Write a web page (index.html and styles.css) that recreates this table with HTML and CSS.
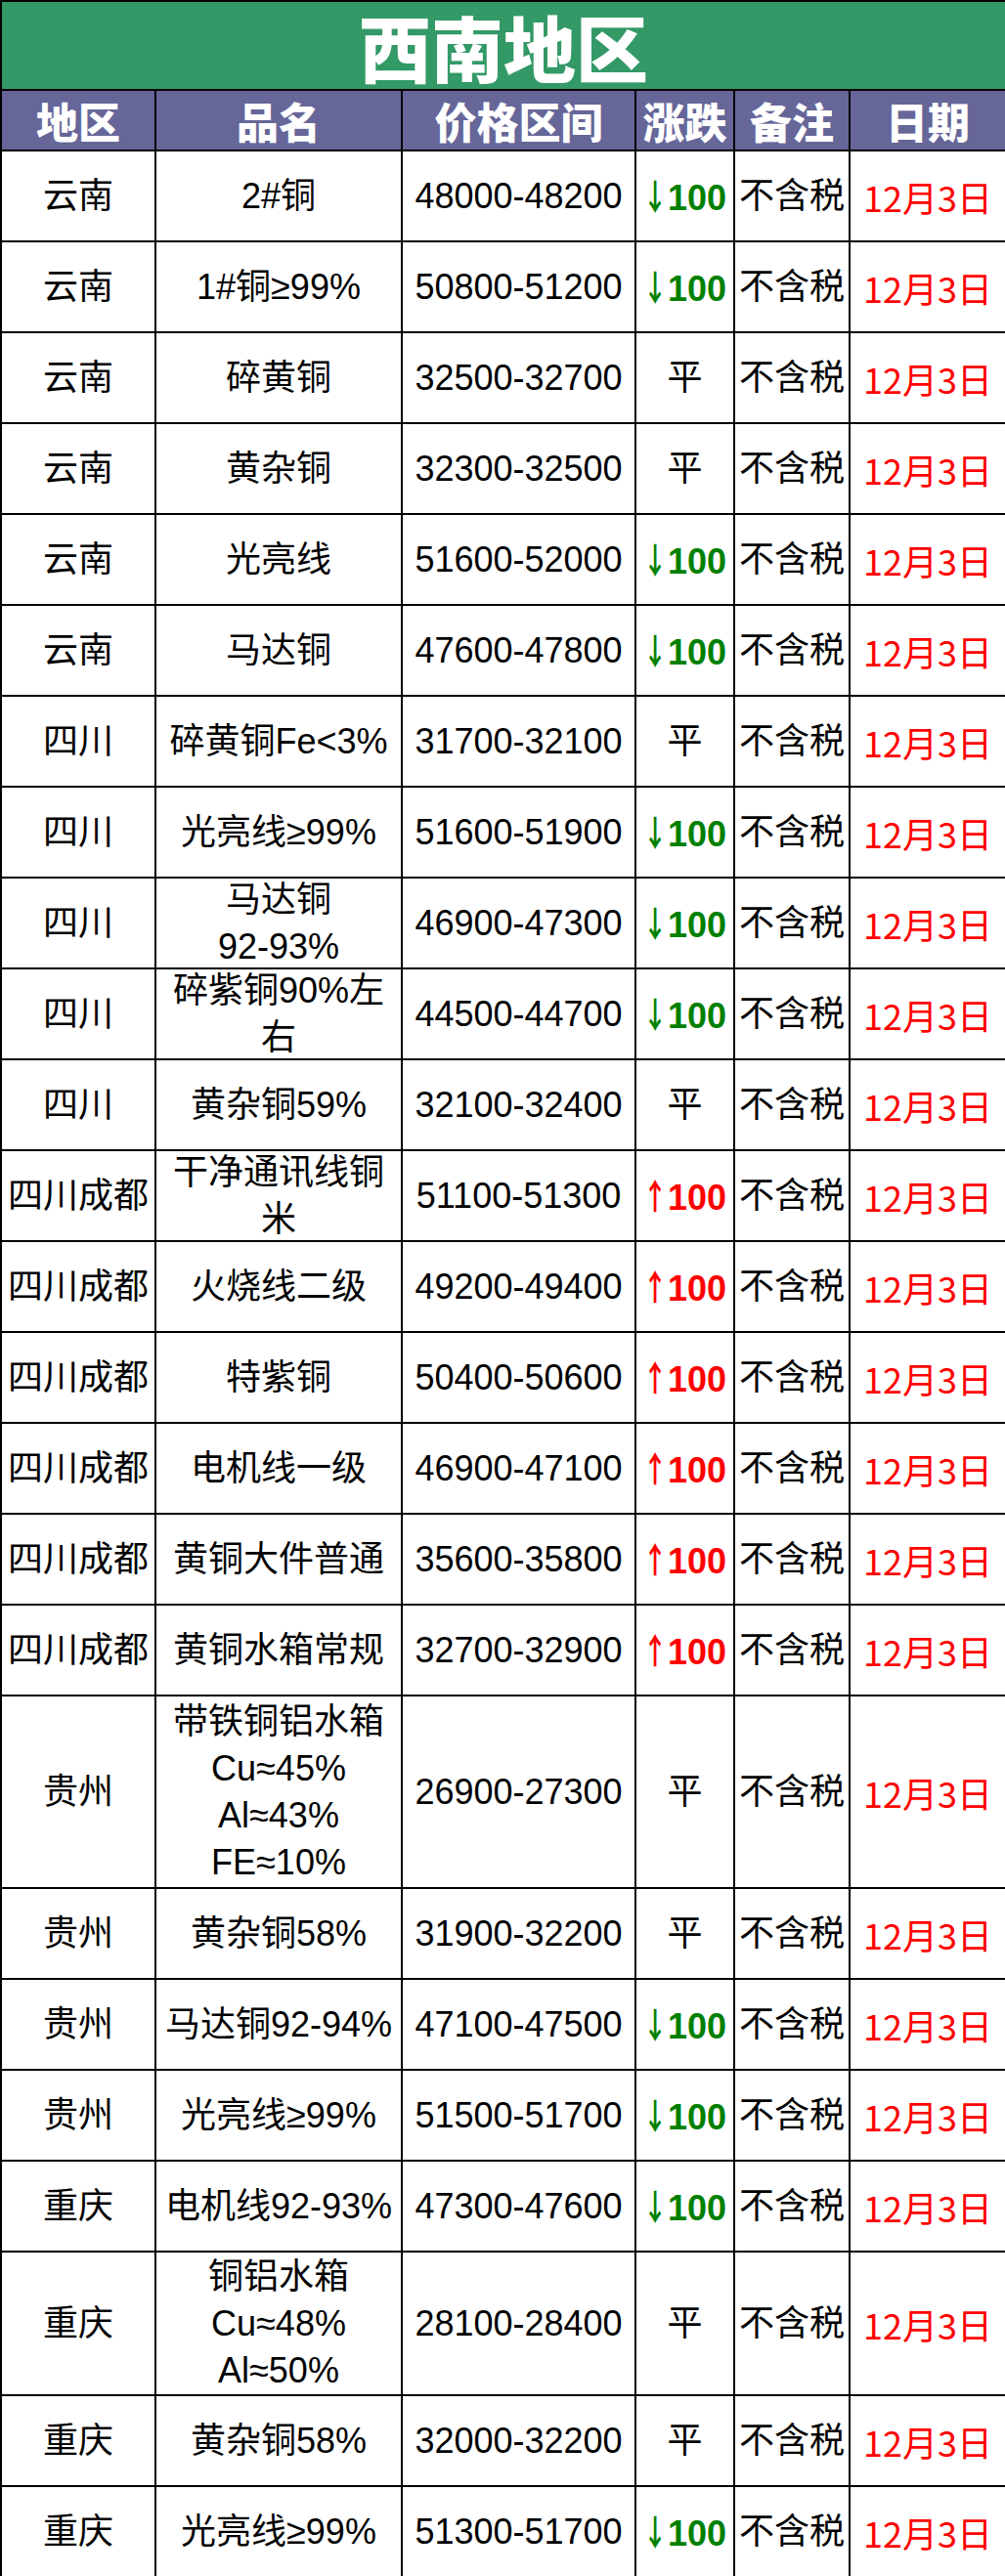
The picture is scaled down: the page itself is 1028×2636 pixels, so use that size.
FILE: index.html
```html
<!DOCTYPE html>
<html lang="zh-CN">
<head>
<meta charset="utf-8">
<title>西南地区</title>
<link rel="stylesheet" href="styles.css">
</head>
<body>
<table class="sheet">
  <colgroup>
    <col class="c-area"><col class="c-name"><col class="c-price"><col class="c-chg"><col class="c-note"><col class="c-date">
  </colgroup>
  <thead>
    <tr class="title-row"><th colspan="6" class="title">西南地区</th></tr>
    <tr class="head-row">
      <th>地区</th><th>品名</th><th>价格区间</th><th>涨跌</th><th>备注</th><th>日期</th>
    </tr>
  </thead>
  <tbody>
    <tr class="r"><td>云南</td><td>2#铜</td><td class="num">48000-48200</td><td class="down"><span class="ar">↓</span>100</td><td>不含税</td><td class="date">12月3日</td></tr>
    <tr class="r"><td>云南</td><td>1#铜≥99%</td><td class="num">50800-51200</td><td class="down"><span class="ar">↓</span>100</td><td>不含税</td><td class="date">12月3日</td></tr>
    <tr class="r"><td>云南</td><td>碎黄铜</td><td class="num">32500-32700</td><td>平</td><td>不含税</td><td class="date">12月3日</td></tr>
    <tr class="r"><td>云南</td><td>黄杂铜</td><td class="num">32300-32500</td><td>平</td><td>不含税</td><td class="date">12月3日</td></tr>
    <tr class="r"><td>云南</td><td>光亮线</td><td class="num">51600-52000</td><td class="down"><span class="ar">↓</span>100</td><td>不含税</td><td class="date">12月3日</td></tr>
    <tr class="r"><td>云南</td><td>马达铜</td><td class="num">47600-47800</td><td class="down"><span class="ar">↓</span>100</td><td>不含税</td><td class="date">12月3日</td></tr>
    <tr class="r"><td>四川</td><td>碎黄铜Fe&lt;3%</td><td class="num">31700-32100</td><td>平</td><td>不含税</td><td class="date">12月3日</td></tr>
    <tr class="r"><td>四川</td><td>光亮线≥99%</td><td class="num">51600-51900</td><td class="down"><span class="ar">↓</span>100</td><td>不含税</td><td class="date">12月3日</td></tr>
    <tr class="r"><td>四川</td><td><span class="ml">马达铜<br>92-93%</span></td><td class="num">46900-47300</td><td class="down"><span class="ar">↓</span>100</td><td>不含税</td><td class="date">12月3日</td></tr>
    <tr class="r"><td>四川</td><td><span class="ml">碎紫铜90%左<br>右</span></td><td class="num">44500-44700</td><td class="down"><span class="ar">↓</span>100</td><td>不含税</td><td class="date">12月3日</td></tr>
    <tr class="r"><td>四川</td><td>黄杂铜59%</td><td class="num">32100-32400</td><td>平</td><td>不含税</td><td class="date">12月3日</td></tr>
    <tr class="r"><td>四川成都</td><td><span class="ml">干净通讯线铜<br>米</span></td><td class="num">51100-51300</td><td class="up"><span class="ar">↑</span>100</td><td>不含税</td><td class="date">12月3日</td></tr>
    <tr class="r"><td>四川成都</td><td>火烧线二级</td><td class="num">49200-49400</td><td class="up"><span class="ar">↑</span>100</td><td>不含税</td><td class="date">12月3日</td></tr>
    <tr class="r"><td>四川成都</td><td>特紫铜</td><td class="num">50400-50600</td><td class="up"><span class="ar">↑</span>100</td><td>不含税</td><td class="date">12月3日</td></tr>
    <tr class="r"><td>四川成都</td><td>电机线一级</td><td class="num">46900-47100</td><td class="up"><span class="ar">↑</span>100</td><td>不含税</td><td class="date">12月3日</td></tr>
    <tr class="r"><td>四川成都</td><td>黄铜大件普通</td><td class="num">35600-35800</td><td class="up"><span class="ar">↑</span>100</td><td>不含税</td><td class="date">12月3日</td></tr>
    <tr class="r"><td>四川成都</td><td>黄铜水箱常规</td><td class="num">32700-32900</td><td class="up"><span class="ar">↑</span>100</td><td>不含税</td><td class="date">12月3日</td></tr>
    <tr class="r4"><td>贵州</td><td>带铁铜铝水箱<br>Cu≈45%<br>Al≈43%<br>FE≈10%</td><td class="num">26900-27300</td><td>平</td><td>不含税</td><td class="date">12月3日</td></tr>
    <tr class="r"><td>贵州</td><td>黄杂铜58%</td><td class="num">31900-32200</td><td>平</td><td>不含税</td><td class="date">12月3日</td></tr>
    <tr class="r"><td>贵州</td><td>马达铜92-94%</td><td class="num">47100-47500</td><td class="down"><span class="ar">↓</span>100</td><td>不含税</td><td class="date">12月3日</td></tr>
    <tr class="r"><td>贵州</td><td>光亮线≥99%</td><td class="num">51500-51700</td><td class="down"><span class="ar">↓</span>100</td><td>不含税</td><td class="date">12月3日</td></tr>
    <tr class="r"><td>重庆</td><td>电机线92-93%</td><td class="num">47300-47600</td><td class="down"><span class="ar">↓</span>100</td><td>不含税</td><td class="date">12月3日</td></tr>
    <tr class="r3"><td>重庆</td><td>铜铝水箱<br>Cu≈48%<br>Al≈50%</td><td class="num">28100-28400</td><td>平</td><td>不含税</td><td class="date">12月3日</td></tr>
    <tr class="r"><td>重庆</td><td>黄杂铜58%</td><td class="num">32000-32200</td><td>平</td><td>不含税</td><td class="date">12月3日</td></tr>
    <tr class="r"><td>重庆</td><td>光亮线≥99%</td><td class="num">51300-51700</td><td class="down"><span class="ar">↓</span>100</td><td>不含税</td><td class="date">12月3日</td></tr>
  </tbody>
</table>
</body>
</html>
```

FILE: styles.css
```css
html, body {
  margin: 0;
  padding: 0;
  background: #ffffff;
}

.sheet {
  width: 1028px;
  border-collapse: collapse;
  table-layout: fixed;
  font-family: "Liberation Sans", "Noto Sans CJK SC", sans-serif;
  color: #000000;
}

.c-area { width: 158px; }
.c-name { width: 252px; }
.c-price { width: 239px; }
.c-chg { width: 101px; }
.c-note { width: 118px; }
.c-date { width: 160px; }

.sheet th,
.sheet td {
  border: 2px solid #000000;
  padding: 0;
  text-align: center;
  vertical-align: middle;
  overflow: visible;
  white-space: nowrap;
}

.title-row { height: 91px; }

.sheet th.title {
  background: #339966;
  color: #ffffff;
  font-family: "Noto Sans CJK SC", sans-serif;
  font-size: 74px;
  font-weight: 900;
  line-height: 76px;
}

.head-row { height: 62px; }

.head-row th {
  background: #666699;
  color: #ffffff;
  font-family: "Noto Sans CJK SC", sans-serif;
  font-size: 43px;
  font-weight: 900;
  line-height: 50px;
}

.sheet td {
  font-size: 36px;
  line-height: 48px;
  font-weight: 400;
}

.r { height: 93px; }
.r3 { height: 147px; }
.r4 { height: 197px; }

.ml {
  display: block;
  margin: -5px 0;
}

.sheet td.down,
.sheet td.up {
  font-weight: 700;
}

.sheet td.down { color: #008000; }
.sheet td.up { color: #ff0000; }

.ar {
  display: inline-block;
  font-family: "Noto Sans CJK SC", sans-serif;
  font-weight: 700;
  transform: scaleX(0.7);
  margin: 0 -5.4px;
}

.sheet td.date {
  color: #ff0000;
  font-family: "Noto Sans CJK SC", sans-serif;
}
```
